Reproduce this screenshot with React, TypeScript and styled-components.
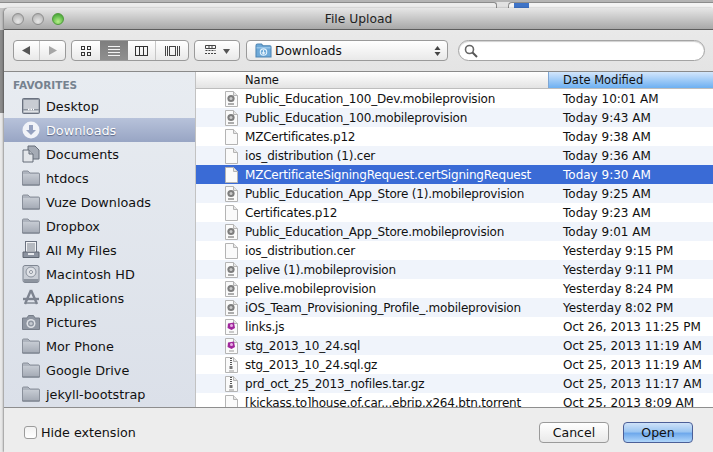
import React from 'react';
import styled, { createGlobalStyle } from 'styled-components';

const GlobalStyle = createGlobalStyle`
  html, body {
    margin: 0;
    padding: 0;
    background: #8b8b8b;
  }
  * {
    box-sizing: border-box;
  }
`;

const UI_FONT = `"DejaVu Sans", "Liberation Sans", sans-serif`;

const Page = styled.div`
  width: 713px;
  height: 452px;
  overflow: hidden;
  display: flex;
  flex-direction: column;
  font-family: ${UI_FONT};
  color: #111;
  background: linear-gradient(#c4c4c4 0 30px, #8b8b8b 30px 113px, #e9e9e9 113px);
`;

const BrowserStrip = styled.div`
  height: 8px;
  flex: none;
  display: flex;
  gap: 11px;
  padding-top: 2px;
  background: linear-gradient(#b4b4b4 0 2px, #e2e2e2 2px);
`;

const UrlEdge = styled.div`
  width: 497px;
  height: 6px;
  border-top: 1px solid #8c8c8c;
  border-right: 1px solid #8c8c8c;
  border-radius: 0 3px 0 0;
  background: #ececec;
`;

const TabEdge = styled.div`
  flex: 1;
  height: 6px;
  padding-left: 5px;
  border-top: 1px solid #8c8c8c;
  border-left: 1px solid #8c8c8c;
  border-radius: 4px 0 0 0;
  background: #f4f4f4;

  &::before {
    content: '';
    display: block;
    width: 15px;
    height: 5px;
    background: #3f74c8;
  }
`;

const Window = styled.div`
  margin-left: 4px;
  flex: 1;
  min-height: 0;
  display: flex;
  flex-direction: column;
  border-radius: 5px 0 0 0;
  overflow: hidden;
  background: #ececec;
  box-shadow: -1px 0 2px rgba(0, 0, 0, 0.35);
`;

const TitleBar = styled.div`
  height: 22px;
  flex: none;
  position: relative;
  display: flex;
  align-items: center;
  justify-content: center;
  background: linear-gradient(#e6e6e6, #a8a8a8);
  border-bottom: 1px solid #5d5d5d;
  font-size: 12.3px;
  color: #222;
`;

const Traffic = styled.div`
  position: absolute;
  left: 8px;
  top: 5px;
  display: flex;
  gap: 8px;
`;

const Light = styled.span<{ $green?: boolean }>`
  width: 12px;
  height: 12px;
  border-radius: 50%;
  border: 1px solid ${(p) => (p.$green ? '#4f9a3a' : '#8e8e8e')};
  background: ${(p) =>
    p.$green
      ? 'radial-gradient(circle at 50% 75%, #b8f08a, #62bb4c 60%, #3e9430)'
      : 'radial-gradient(circle at 50% 75%, #e8e8e8, #c2c2c2 60%, #a0a0a0)'};
`;

const Toolbar = styled.div`
  height: 42px;
  flex: none;
  display: flex;
  align-items: center;
  padding: 0 8px 0 9px;
  background: linear-gradient(#e9e9e9, #e4e4e4);
  border-bottom: 1px solid #8a8a8a;
`;

const ButtonGroup = styled.div<{ $width: number; $gap: number }>`
  width: ${(p) => p.$width}px;
  height: 21px;
  flex: none;
  display: flex;
  align-items: stretch;
  margin-right: ${(p) => p.$gap}px;
  border: 1px solid #9a9a9a;
  border-radius: 4px;
  overflow: hidden;
  background: linear-gradient(#ffffff, #e9e9e9);
`;

const Segment = styled.div<{ $active?: boolean; $divider?: boolean; $width?: number }>`
  flex: ${(p) => (p.$width ? `0 0 ${p.$width}px` : '1')};
  display: flex;
  align-items: center;
  justify-content: center;
  border-right: ${(p) => (p.$divider ? '1px solid #c6c6c6' : 'none')};
  background: ${(p) => (p.$active ? 'linear-gradient(#7e7e7e, #8f8f8f)' : 'transparent')};
`;

const PathPopup = styled.div`
  width: 202px;
  height: 21px;
  flex: none;
  display: flex;
  align-items: center;
  gap: 3px;
  padding: 0 6px 0 8px;
  margin-right: 10px;
  border: 1px solid #9a9a9a;
  border-radius: 4px;
  background: linear-gradient(#ffffff, #e9e9e9);
  font-size: 12.2px;
`;

const PathLabel = styled.span`
  flex: 1;
`;

const SearchField = styled.div`
  flex: 1;
  height: 21px;
  display: flex;
  align-items: center;
  padding-left: 5px;
  border: 1px solid #a4a4a4;
  border-radius: 11px;
  background: #fff;
  box-shadow: inset 0 1px 1px #d0d0d0;
`;

const Body = styled.div`
  flex: 1;
  min-height: 0;
  display: flex;
  border-bottom: 1px solid #8e8e8e;
`;

const Sidebar = styled.div`
  width: 192px;
  flex: none;
  padding-top: 5px;
  overflow: hidden;
  background: linear-gradient(#e8ecf1, #dbe0e9);
  border-right: 1px solid #c2c2c2;
`;

const SidebarHeading = styled.div`
  height: 17px;
  padding-left: 9px;
  font-size: 10.5px;
  font-weight: bold;
  line-height: 17px;
  color: #76828f;
`;

const SidebarRow = styled.div<{ $selected?: boolean }>`
  height: 24px;
  display: flex;
  align-items: center;
  gap: 6px;
  padding-left: 18px;
  font-size: 12.8px;
  color: ${(p) => (p.$selected ? '#fff' : '#111')};
  text-shadow: ${(p) => (p.$selected ? '0 1px 1px #5a6684' : 'none')};
  background: ${(p) =>
    p.$selected ? 'linear-gradient(#b7c2da, #98a5c4)' : 'transparent'};
`;

const FileList = styled.div`
  flex: 1;
  min-width: 0;
  display: flex;
  flex-direction: column;
  overflow: hidden;
  background: #fff;
`;

const HeaderRow = styled.div`
  height: 17px;
  flex: none;
  display: grid;
  grid-template-columns: 352px 1fr;
  font-size: 11.5px;
  line-height: 16px;
  border-bottom: 1px solid #bdbdbd;
  background: linear-gradient(#ffffff, #e3e3e3);
`;

const HeaderCell = styled.div<{ $sorted?: boolean }>`
  padding-left: ${(p) => (p.$sorted ? '14px' : '49px')};
  background: ${(p) => (p.$sorted ? 'linear-gradient(#d3e6fb, #6db0f2)' : 'transparent')};
  border-left: ${(p) => (p.$sorted ? '1px solid #7ea6d4' : 'none')};
`;

const FileRow = styled.div<{ $selected?: boolean; $odd?: boolean }>`
  height: 19px;
  flex: none;
  display: grid;
  grid-template-columns: 352px 1fr;
  align-items: center;
  font-size: 12px;
  color: ${(p) => (p.$selected ? '#fff' : '#111')};
  background: ${(p) => (p.$selected ? '#3a6bd6' : p.$odd ? '#f0f4fb' : '#fff')};
`;

const NameCell = styled.div`
  display: flex;
  align-items: center;
  gap: 7px;
  padding-left: 29px;
  white-space: nowrap;
  letter-spacing: -0.2px;
`;

const DateCell = styled.div`
  padding-left: 15px;
  white-space: nowrap;
`;

const BottomBar = styled.div`
  height: 44px;
  flex: none;
  display: flex;
  align-items: center;
  padding: 5px 20px 0 20px;
  background: #ededed;
`;

const CheckBox = styled.span`
  width: 13px;
  height: 13px;
  margin-right: 4px;
  border: 1px solid #9c9c9c;
  border-radius: 3px;
  background: linear-gradient(#f2f2f2, #ffffff);
`;

const CheckLabel = styled.span`
  flex: 1;
  font-size: 12.7px;
`;

const PushButton = styled.div<{ $primary?: boolean }>`
  width: 70px;
  height: 21px;
  margin-left: ${(p) => (p.$primary ? '14px' : '0')};
  display: flex;
  align-items: center;
  justify-content: center;
  font-size: 12.5px;
  border-radius: 4px;
  border: 1px solid ${(p) => (p.$primary ? '#4c5f97' : '#9a9a9a')};
  background: ${(p) =>
    p.$primary
      ? 'linear-gradient(#cfe2f8 0%, #9cc6f2 45%, #6fa9ec 55%, #b0d6fa 100%)'
      : 'linear-gradient(#ffffff, #e9e9e9)'};
`;

const Svg = styled.svg`
  flex: none;
  display: block;
`;

const ICON_GREY = '#5e5e5e';

const NavIcon = ({ right }: { right?: boolean }) => (
  <Svg width="11" height="11" viewBox="0 0 11 11">
    <path
      d={right ? 'M2 1 L10 5.5 L2 10 Z' : 'M9 1 L1 5.5 L9 10 Z'}
      fill={right ? '#a6a6a6' : '#555'}
    />
  </Svg>
);

const IconGridView = () => (
  <Svg width="12" height="12" viewBox="0 0 12 12" fill="none" stroke="#333">
    <rect x="1.5" y="1.5" width="3" height="3" />
    <rect x="7.5" y="1.5" width="3" height="3" />
    <rect x="1.5" y="7.5" width="3" height="3" />
    <rect x="7.5" y="7.5" width="3" height="3" />
  </Svg>
);

const IconListView = () => (
  <Svg width="12" height="12" viewBox="0 0 12 12" stroke="#f2f2f2">
    <path d="M0 1.5H12M0 4.5H12M0 7.5H12M0 10.5H12" />
  </Svg>
);

const IconColumnView = () => (
  <Svg width="13" height="10" viewBox="0 0 13 10" fill="none" stroke="#333">
    <rect x="0.5" y="0.5" width="12" height="9" />
    <path d="M4.5 0V10M8.5 0V10" />
  </Svg>
);

const IconCoverView = () => (
  <Svg width="15" height="10" viewBox="0 0 15 10" fill="none" stroke="#444">
    <path d="M0.5 0V10M2.5 0V10" />
    <rect x="4.5" y="0.5" width="6" height="9" />
    <path d="M12.5 0V10M14.5 0V10" />
  </Svg>
);

const IconArrange = () => (
  <Svg width="25" height="11" viewBox="0 0 25 11">
    <g fill="none" stroke="#444">
      <path d="M0.5 0.5H10.5V3.5H0.5ZM4 0.5V3.5M7 0.5V3.5" />
      <path d="M0.5 5.5H10.5M0 8.5H11" strokeDasharray="2 1" />
    </g>
    <path d="M18 4H25L21.5 9Z" fill="#555" />
  </Svg>
);

const FolderBlue = () => (
  <Svg width="17" height="15" viewBox="0 0 15 14">
    <path d="M0.5 2.5 Q0.5 1 2 1 H5.5 L7 2.5 H13.5 Q14.5 2.5 14.5 3.5 V13 H0.5 Z" fill="#6ea9d8" stroke="#4f86b4" />
    <rect x="1" y="4" width="13" height="1" fill="#a7d0ee" />
    <circle cx="7.5" cy="8.5" r="3" fill="none" stroke="#e2f1fb" />
    <path d="M7.5 6.5V10M6 8.7L7.5 10.2L9 8.7" fill="none" stroke="#e2f1fb" />
  </Svg>
);

const Stepper = () => (
  <Svg width="7" height="12" viewBox="0 0 7 12">
    <path d="M3.5 1L6.5 5H0.5ZM3.5 11L0.5 7H6.5Z" fill="#444" />
  </Svg>
);

const Magnifier = () => (
  <Svg width="14" height="14" viewBox="0 0 14 14" fill="none">
    <circle cx="5.5" cy="5.5" r="4" stroke="#666" strokeWidth="1.6" />
    <path d="M8.5 8.5L13 13" stroke="#555" strokeWidth="2" />
  </Svg>
);

/* sidebar icons, all 18 wide */
const IconDesktop = () => (
  <Svg width="18" height="16" viewBox="0 0 18 16">
    <rect x="0.5" y="0.5" width="17" height="15" rx="1" fill="#8d949f" stroke="#6b7280" />
    <rect x="1.5" y="2" width="15" height="9" fill="#c8ccd3" />
    <path d="M6 11.5H12" stroke="#fff" strokeWidth="1.5" strokeDasharray="1.5 1" />
    <rect x="1.5" y="12.5" width="15" height="2" fill="#dfe2e6" />
  </Svg>
);

const IconDownloads = () => (
  <Svg width="18" height="18" viewBox="0 0 18 18">
    <circle cx="9" cy="9" r="8.5" fill="#f1f3f8" />
    <path d="M7 4H11V9H14L9 14L4 9H7Z" fill="#95a1bf" />
  </Svg>
);

const IconDocuments = () => (
  <Svg width="18" height="18" viewBox="0 0 18 18">
    <path d="M6 1H13L17 5V14H6Z" fill="#a5abb5" stroke="#656c78" />
    <path d="M1 5H7L11 9V17H1Z" fill="#e3e6ea" stroke="#656c78" />
    <path d="M7 5V9H11" fill="#b9bec6" stroke="#656c78" />
  </Svg>
);

const IconFolder = () => (
  <Svg width="18" height="16" viewBox="0 0 18 16">
    <defs>
      <linearGradient id="folderFill" x1="0" y1="0" x2="0" y2="1">
        <stop offset="0" stopColor="#c6cbd3" />
        <stop offset="1" stopColor="#a3a9b4" />
      </linearGradient>
    </defs>
    <path d="M0.5 2 Q0.5 1 1.5 1 H6 L8 3 H16.5 Q17.5 3 17.5 4 V15 H0.5 Z" fill="#aeb4be" stroke="#8a909b" />
    <rect x="1" y="4" width="16" height="11" fill="url(#folderFill)" />
    <rect x="0.5" y="14.5" width="17" height="1" fill="#6f7681" />
  </Svg>
);

const IconAllFiles = () => (
  <Svg width="18" height="18" viewBox="0 0 18 18">
    <rect x="3.5" y="0.5" width="11" height="11" fill="#f2f3f5" stroke="#6b7280" />
    <path d="M5 3H13M5 5H13M5 7H13M5 9H13" stroke="#79808c" />
    <path d="M1 11H17V16.5H1Z" fill="#8c93a0" stroke="#5e6571" />
    <rect x="6" y="12" width="6" height="2" fill="#e8eaee" />
  </Svg>
);

const IconDisk = () => (
  <Svg width="18" height="18" viewBox="0 0 18 18">
    <rect x="1" y="0.5" width="16" height="17" rx="2" fill="#c9ced6" stroke="#7f8692" />
    <circle cx="9" cy="7" r="5" fill="#dfe2e7" stroke="#8a919d" />
    <circle cx="9" cy="7" r="1.5" fill="#fff" stroke="#8a919d" />
    <rect x="1.5" y="14" width="15" height="3" fill="#8d949f" />
  </Svg>
);

const IconApps = () => (
  <Svg width="18" height="18" viewBox="0 0 18 18" fill="none" stroke="#7d8490">
    <path d="M9 1L3 15M9 1L15 15" strokeWidth="2.4" />
    <path d="M1 10H17" strokeWidth="2.4" />
    <path d="M4 14H14" strokeWidth="1.4" />
  </Svg>
);

const IconCamera = () => (
  <Svg width="18" height="15" viewBox="0 0 18 15">
    <path d="M0.5 3H5L6.5 0.5H11.5L13 3H17.5V14.5H0.5Z" fill="#8f96a2" stroke="#767d89" />
    <circle cx="9" cy="8.5" r="4.5" fill="#dfe2e7" />
    <circle cx="9" cy="8.5" r="3" fill="#8f96a2" />
    <circle cx="9" cy="8.5" r="1.6" fill="#c5cad1" />
  </Svg>
);

type FileKind = 'provision' | 'plain' | 'script' | 'archive';

const FileIcon = ({ kind }: { kind: FileKind }) => (
  <Svg width="13" height="16" viewBox="0 0 13 16">
    <path d="M0.5 0.5H8.5L12.5 4.5V15.5H0.5Z" fill="#fafafa" stroke="#b4b4b4" />
    <path d="M8.5 0.5V4.5H12.5" fill="#e6e6e6" stroke="#b4b4b4" />
    {kind === 'provision' && (
      <g>
        <circle cx="6" cy="7.5" r="3.6" fill="#7d7d7d" />
        <circle cx="6" cy="7.5" r="1.5" fill="#c9c9c9" />
        <path d="M3 13H9" stroke={ICON_GREY} />
      </g>
    )}
    {kind === 'script' && (
      <g>
        <path d="M3 4.5L9 3.5L10 9L6.5 11L2.5 9Z" fill="#a0269c" />
        <circle cx="6.5" cy="6.5" r="1.5" fill="#e6b3e4" />
        <path d="M4 13H9" stroke="#999" />
      </g>
    )}
    {kind === 'archive' && (
      <g>
        <path d="M6 1V9" stroke="#555" strokeWidth="2" strokeDasharray="1 1" />
        <rect x="4.5" y="9" width="3" height="3" fill="#777" />
        <path d="M4 14H9" stroke="#999" />
      </g>
    )}
  </Svg>
);

const SIDEBAR_ITEMS: { label: string; icon: React.ReactNode; selected?: boolean }[] = [
  { label: 'Desktop', icon: <IconDesktop /> },
  { label: 'Downloads', icon: <IconDownloads />, selected: true },
  { label: 'Documents', icon: <IconDocuments /> },
  { label: 'htdocs', icon: <IconFolder /> },
  { label: 'Vuze Downloads', icon: <IconFolder /> },
  { label: 'Dropbox', icon: <IconFolder /> },
  { label: 'All My Files', icon: <IconAllFiles /> },
  { label: 'Macintosh HD', icon: <IconDisk /> },
  { label: 'Applications', icon: <IconApps /> },
  { label: 'Pictures', icon: <IconCamera /> },
  { label: 'Mor Phone', icon: <IconFolder /> },
  { label: 'Google Drive', icon: <IconFolder /> },
  { label: 'jekyll-bootstrap', icon: <IconFolder /> },
];

const FILES: { name: string; date: string; kind: FileKind; selected?: boolean }[] = [
  { name: 'Public_Education_100_Dev.mobileprovision', date: 'Today 10:01 AM', kind: 'provision' },
  { name: 'Public_Education_100.mobileprovision', date: 'Today 9:43 AM', kind: 'provision' },
  { name: 'MZCertificates.p12', date: 'Today 9:38 AM', kind: 'plain' },
  { name: 'ios_distribution (1).cer', date: 'Today 9:36 AM', kind: 'plain' },
  { name: 'MZCertificateSigningRequest.certSigningRequest', date: 'Today 9:30 AM', kind: 'plain', selected: true },
  { name: 'Public_Education_App_Store (1).mobileprovision', date: 'Today 9:25 AM', kind: 'provision' },
  { name: 'Certificates.p12', date: 'Today 9:23 AM', kind: 'plain' },
  { name: 'Public_Education_App_Store.mobileprovision', date: 'Today 9:01 AM', kind: 'provision' },
  { name: 'ios_distribution.cer', date: 'Yesterday 9:15 PM', kind: 'plain' },
  { name: 'pelive (1).mobileprovision', date: 'Yesterday 9:11 PM', kind: 'provision' },
  { name: 'pelive.mobileprovision', date: 'Yesterday 8:24 PM', kind: 'provision' },
  { name: 'iOS_Team_Provisioning_Profile_.mobileprovision', date: 'Yesterday 8:02 PM', kind: 'provision' },
  { name: 'links.js', date: 'Oct 26, 2013 11:25 PM', kind: 'script' },
  { name: 'stg_2013_10_24.sql', date: 'Oct 25, 2013 11:19 AM', kind: 'script' },
  { name: 'stg_2013_10_24.sql.gz', date: 'Oct 25, 2013 11:19 AM', kind: 'archive' },
  { name: 'prd_oct_25_2013_nofiles.tar.gz', date: 'Oct 25, 2013 11:17 AM', kind: 'archive' },
  { name: '[kickass.to]house.of.car...ebrip.x264.btn.torrent', date: 'Oct 25, 2013 8:09 AM', kind: 'plain' },
];

const App = () => (
  <Page>
    <GlobalStyle />
    <BrowserStrip>
      <UrlEdge />
      <TabEdge />
    </BrowserStrip>
    <Window>
      <TitleBar>
        <Traffic>
          <Light />
          <Light />
          <Light $green />
        </Traffic>
        File Upload
      </TitleBar>
      <Toolbar>
        <ButtonGroup $width={53} $gap={5}>
          <Segment $divider>
            <NavIcon />
          </Segment>
          <Segment>
            <NavIcon right />
          </Segment>
        </ButtonGroup>
        <ButtonGroup $width={118} $gap={5}>
          <Segment $width={28}>
            <IconGridView />
          </Segment>
          <Segment $active $width={28}>
            <IconListView />
          </Segment>
          <Segment $divider $width={28}>
            <IconColumnView />
          </Segment>
          <Segment>
            <IconCoverView />
          </Segment>
        </ButtonGroup>
        <ButtonGroup $width={46} $gap={6}>
          <Segment>
            <IconArrange />
          </Segment>
        </ButtonGroup>
        <PathPopup>
          <FolderBlue />
          <PathLabel>Downloads</PathLabel>
          <Stepper />
        </PathPopup>
        <SearchField>
          <Magnifier />
        </SearchField>
      </Toolbar>
      <Body>
        <Sidebar>
          <SidebarHeading>FAVORITES</SidebarHeading>
          {SIDEBAR_ITEMS.map((item) => (
            <SidebarRow key={item.label} $selected={item.selected}>
              {item.icon}
              {item.label}
            </SidebarRow>
          ))}
        </Sidebar>
        <FileList>
          <HeaderRow>
            <HeaderCell>Name</HeaderCell>
            <HeaderCell $sorted>Date Modified</HeaderCell>
          </HeaderRow>
          {FILES.map((file, i) => (
            <FileRow key={file.name} $selected={file.selected} $odd={i % 2 === 1}>
              <NameCell>
                <FileIcon kind={file.kind} />
                {file.name}
              </NameCell>
              <DateCell>{file.date}</DateCell>
            </FileRow>
          ))}
        </FileList>
      </Body>
      <BottomBar>
        <CheckBox />
        <CheckLabel>Hide extension</CheckLabel>
        <PushButton>Cancel</PushButton>
        <PushButton $primary>Open</PushButton>
      </BottomBar>
    </Window>
  </Page>
);

export default App;
